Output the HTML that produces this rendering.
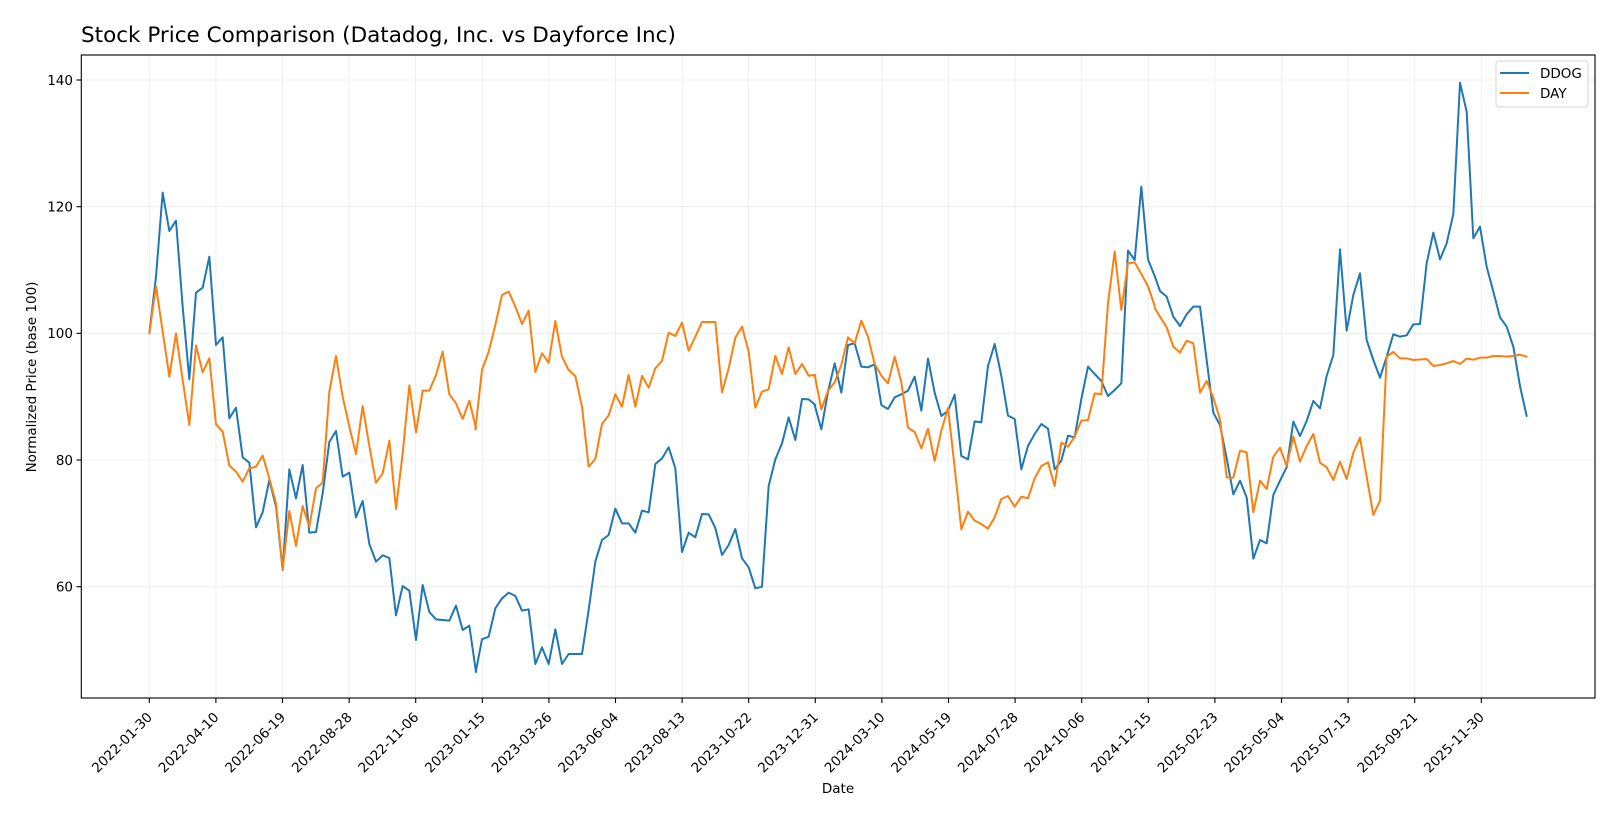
<!DOCTYPE html>
<html><head><meta charset="utf-8"><style>
html,body{margin:0;padding:0;background:#fff;}
svg{display:block;font-family:"DejaVu Sans","Liberation Sans",sans-serif;}
</style></head><body>
<svg width="1620" height="819" viewBox="0 0 1620 819" xmlns="http://www.w3.org/2000/svg">
<rect width="1620" height="819" fill="#fff"/>
<text x="81" y="42" font-size="21.5" fill="#000">Stock Price Comparison (Datadog, Inc. vs Dayforce Inc)</text>
<g stroke="#ebebeb" stroke-width="0.8">
<line x1="81" x2="1595" y1="586.7" y2="586.7"/><line x1="81" x2="1595" y1="460" y2="460"/><line x1="81" x2="1595" y1="333.3" y2="333.3"/><line x1="81" x2="1595" y1="206.7" y2="206.7"/><line x1="81" x2="1595" y1="80" y2="80"/>
<line y1="55" y2="698" x1="149.3" x2="149.3"/><line y1="55" y2="698" x1="215.9" x2="215.9"/><line y1="55" y2="698" x1="282.5" x2="282.5"/><line y1="55" y2="698" x1="349.1" x2="349.1"/><line y1="55" y2="698" x1="415.7" x2="415.7"/><line y1="55" y2="698" x1="482.3" x2="482.3"/><line y1="55" y2="698" x1="548.9" x2="548.9"/><line y1="55" y2="698" x1="615.5" x2="615.5"/><line y1="55" y2="698" x1="682.1" x2="682.1"/><line y1="55" y2="698" x1="748.7" x2="748.7"/><line y1="55" y2="698" x1="815.3" x2="815.3"/><line y1="55" y2="698" x1="881.9" x2="881.9"/><line y1="55" y2="698" x1="948.5" x2="948.5"/><line y1="55" y2="698" x1="1015.1" x2="1015.1"/><line y1="55" y2="698" x1="1081.7" x2="1081.7"/><line y1="55" y2="698" x1="1148.3" x2="1148.3"/><line y1="55" y2="698" x1="1214.9" x2="1214.9"/><line y1="55" y2="698" x1="1281.5" x2="1281.5"/><line y1="55" y2="698" x1="1348.1" x2="1348.1"/><line y1="55" y2="698" x1="1414.7" x2="1414.7"/><line y1="55" y2="698" x1="1481.3" x2="1481.3"/>
</g>
<g fill="none" stroke-width="6" stroke-linejoin="round" stroke-linecap="round">
<g transform="translate(130,160) scale(0.33333)">
<polyline stroke="#1f77b4" points="58,520 78,350 98,98 118,213 138,182 158,440 178,658 198,398 218,383 238,290 258,555 278,532 298,775 318,743 338,892 358,908 378,1102 398,1057 418,960 438,1040 458,1230 478,928 498,1015 518,915 538,1118 558,1116 578,1000 598,846 618,813 638,950 658,938 678,1072 698,1023 718,1152 738,1205 758,1186 778,1194 798,1366 818,1278 838,1292 858,1440 878,1275 898,1356 918,1378 958,1382 978,1337 998,1410 1018,1397 1038,1536"/>
<polyline stroke="#ff7f0e" points="58,520 78,378 98,515 118,650 138,520 158,660 178,795 198,556 218,637 238,595 258,793 278,815 298,917 318,935 338,965 358,925 378,920 398,887 418,955 438,1030 458,1228 478,1053 498,1158 518,1038 538,1100 558,985 578,968 598,695 618,588 638,710 658,800 678,882 698,738 718,858 738,968 758,940 778,842 798,1047 818,880 838,676 858,817 878,692 898,692 918,645 938,575 958,703 978,730 998,777 1018,722 1038,806"/>
</g>
<g transform="translate(470,260) scale(0.33333)">
<polyline stroke="#1f77b4" points="18,1232 36,1138 56,1130 76,1045 96,1015 116,998 136,1008 156,1052 176,1048 196,1212 216,1162 236,1212 256,1108 276,1212 296,1182 336,1182 356,1050 376,905 396,840 416,825 436,746 456,790 476,790 496,818 516,752 536,757 556,612 576,595 596,562 616,625 636,876 656,818 676,832 696,762 716,763 736,804 756,885 776,855 796,807 816,895 836,922 856,985 876,980 896,678 916,598 936,550 956,472 976,540 996,417 1016,418 1036,435"/>
<polyline stroke="#ff7f0e" points="16,508 36,330 56,275 76,195 96,105 116,95 136,140 156,192 176,152 196,336 216,280 236,308 256,183 276,290 296,330 316,348 336,440 356,620 376,597 396,492 416,466 436,403 456,440 476,345 496,440 516,348 536,383 556,325 576,303 596,218 616,228 636,188 656,272 676,230 696,186 736,186 756,397 776,325 796,233 816,200 836,275 856,443 876,395 896,388 916,288 936,342 956,262 976,342 996,312 1016,347 1036,345"/>
</g>
<g transform="translate(810,170) scale(0.33333)">
<polyline stroke="#1f77b4" points="14,705 34,778 54,665 74,580 94,668 114,525 134,520 154,590 174,592 194,583 214,705 234,717 254,682 274,673 294,662 314,620 334,722 354,566 374,668 394,738 414,722 434,674 454,858 474,868 494,754 514,757 534,588 554,522 574,618 594,737 614,747 634,898 654,828 674,792 694,762 714,776 734,898 754,872 774,797 794,802 814,687 834,590 854,612 874,633 894,678 914,660 934,640 954,242 974,270 994,50 1014,268 1034,318"/>
<polyline stroke="#ff7f0e" points="14,615 34,718 54,662 74,637 94,585 114,502 134,520 154,452 174,500 194,582 214,617 234,640 254,560 274,637 294,773 314,786 334,835 354,776 374,873 394,782 414,714 434,893 454,1078 474,1025 494,1052 514,1062 534,1076 554,1042 574,987 594,978 614,1010 634,980 654,985 674,925 694,888 714,877 734,948 754,818 774,830 794,800 814,752 834,750 854,670 874,673 894,400 914,245 934,420 954,280 974,277 994,312 1014,348 1034,408"/>
</g>
<g transform="translate(1150,60) scale(0.33333)">
<polyline stroke="#1f77b4" points="14,648 30,693 50,710 70,770 90,798 110,763 130,740 150,740 170,900 190,1058 210,1095 230,1195 250,1303 270,1262 290,1312 310,1496 330,1440 350,1450 370,1305 390,1262 410,1222 430,1085 450,1128 470,1083 490,1023 510,1045 530,948 550,885 570,568 590,812 610,705 630,640 650,840 670,900 690,953 710,890 730,823 750,830 770,826 790,793 810,792 830,610 850,518 870,598 890,550 910,462 930,68 950,155 970,535 990,500 1010,620 1030,695 1050,772 1070,800 1090,860 1110,978 1130,1068"/>
<polyline stroke="#ff7f0e" points="14,744 30,770 50,802 70,860 90,878 110,842 130,850 150,998 170,963 190,1013 210,1078 230,1252 250,1253 270,1172 290,1177 310,1357 330,1262 350,1287 370,1190 390,1163 410,1218 430,1130 450,1205 470,1158 490,1122 510,1208 530,1222 550,1260 570,1205 590,1257 610,1178 630,1133 650,1250 670,1365 690,1322 710,890 730,876 750,895 770,895 790,900 830,897 850,918 870,915 890,910 910,903 930,912 950,896 970,899 990,893 1010,893 1030,888 1050,888 1070,890 1090,888 1110,884 1130,890"/>
</g>
</g>
<rect x="81.3" y="55" width="1513.7" height="643" fill="none" stroke="#000" stroke-width="1.1"/>
<g stroke="#000" stroke-width="1.1">
<line x1="76.5" x2="81.3" y1="586.7" y2="586.7"/><line x1="76.5" x2="81.3" y1="460" y2="460"/><line x1="76.5" x2="81.3" y1="333.3" y2="333.3"/><line x1="76.5" x2="81.3" y1="206.7" y2="206.7"/><line x1="76.5" x2="81.3" y1="80" y2="80"/>
</g>
<g font-size="13.5" text-anchor="end" fill="#000">
<text x="73" y="591.5">60</text><text x="73" y="465">80</text><text x="73" y="338">100</text><text x="73" y="211.5">120</text><text x="73" y="85">140</text>
</g>
<g stroke="#000" stroke-width="1.1">
<line y1="698" y2="703" x1="149.3" x2="149.3"/><line y1="698" y2="703" x1="215.9" x2="215.9"/><line y1="698" y2="703" x1="282.5" x2="282.5"/><line y1="698" y2="703" x1="349.1" x2="349.1"/><line y1="698" y2="703" x1="415.7" x2="415.7"/><line y1="698" y2="703" x1="482.3" x2="482.3"/><line y1="698" y2="703" x1="548.9" x2="548.9"/><line y1="698" y2="703" x1="615.5" x2="615.5"/><line y1="698" y2="703" x1="682.1" x2="682.1"/><line y1="698" y2="703" x1="748.7" x2="748.7"/><line y1="698" y2="703" x1="815.3" x2="815.3"/><line y1="698" y2="703" x1="881.9" x2="881.9"/><line y1="698" y2="703" x1="948.5" x2="948.5"/><line y1="698" y2="703" x1="1015.1" x2="1015.1"/><line y1="698" y2="703" x1="1081.7" x2="1081.7"/><line y1="698" y2="703" x1="1148.3" x2="1148.3"/><line y1="698" y2="703" x1="1214.9" x2="1214.9"/><line y1="698" y2="703" x1="1281.5" x2="1281.5"/><line y1="698" y2="703" x1="1348.1" x2="1348.1"/><line y1="698" y2="703" x1="1414.7" x2="1414.7"/><line y1="698" y2="703" x1="1481.3" x2="1481.3"/>
</g>
<g font-size="13.5" text-anchor="end" fill="#000">
<text transform="translate(153,718) rotate(-45)">2022-01-30</text>
<text transform="translate(219.6,718) rotate(-45)">2022-04-10</text>
<text transform="translate(286.2,718) rotate(-45)">2022-06-19</text>
<text transform="translate(352.8,718) rotate(-45)">2022-08-28</text>
<text transform="translate(419.4,718) rotate(-45)">2022-11-06</text>
<text transform="translate(486,718) rotate(-45)">2023-01-15</text>
<text transform="translate(552.6,718) rotate(-45)">2023-03-26</text>
<text transform="translate(619.2,718) rotate(-45)">2023-06-04</text>
<text transform="translate(685.8,718) rotate(-45)">2023-08-13</text>
<text transform="translate(752.4,718) rotate(-45)">2023-10-22</text>
<text transform="translate(819,718) rotate(-45)">2023-12-31</text>
<text transform="translate(885.6,718) rotate(-45)">2024-03-10</text>
<text transform="translate(952.2,718) rotate(-45)">2024-05-19</text>
<text transform="translate(1018.8,718) rotate(-45)">2024-07-28</text>
<text transform="translate(1085.4,718) rotate(-45)">2024-10-06</text>
<text transform="translate(1152,718) rotate(-45)">2024-12-15</text>
<text transform="translate(1218.6,718) rotate(-45)">2025-02-23</text>
<text transform="translate(1285.2,718) rotate(-45)">2025-05-04</text>
<text transform="translate(1351.8,718) rotate(-45)">2025-07-13</text>
<text transform="translate(1418.4,718) rotate(-45)">2025-09-21</text>
<text transform="translate(1485,718) rotate(-45)">2025-11-30</text>
</g>
<text x="838" y="793" font-size="13.5" text-anchor="middle" fill="#000">Date</text>
<text transform="translate(36,377) rotate(-90)" font-size="13.5" text-anchor="middle" fill="#000">Normalized Price (base 100)</text>
<rect x="1496" y="61" width="92" height="46" rx="3" fill="#fff" fill-opacity="0.8" stroke="#d6d6d6" stroke-width="1"/>
<line x1="1500" x2="1529" y1="73" y2="73" stroke="#1f77b4" stroke-width="2"/>
<line x1="1500" x2="1529" y1="93" y2="93" stroke="#ff7f0e" stroke-width="2"/>
<text x="1540" y="78" font-size="13.5" fill="#000">DDOG</text>
<text x="1540" y="98" font-size="13.5" fill="#000">DAY</text>
</svg>
</body></html>
